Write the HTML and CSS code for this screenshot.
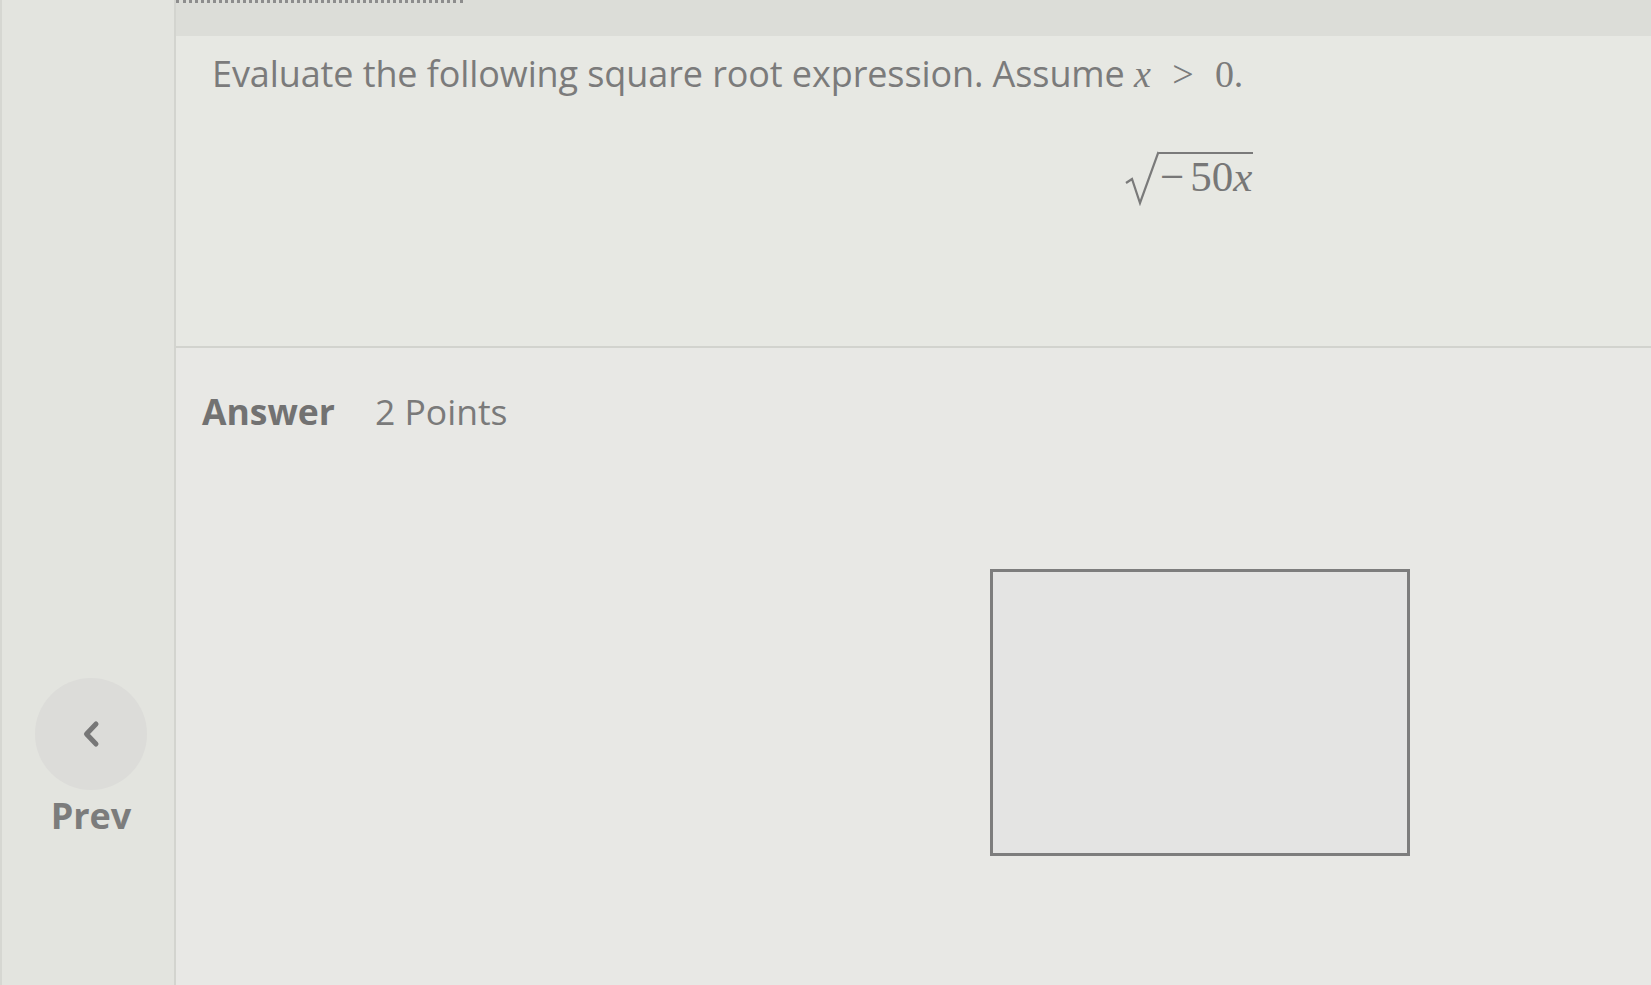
FILE: index.html
```html
<!DOCTYPE html>
<html lang="en">
<head>
<meta charset="utf-8">
<title>Question</title>
<link rel="stylesheet" href="styles.css">
</head>
<body>
<div class="page">
  <aside class="sidebar">
    <div class="nav-prev">
      <button class="prev-circle" type="button" aria-label="Previous">
        <svg width="22" height="30" viewBox="0 0 22 30"><path d="M16 5 L6.5 15 L16 25" fill="none" stroke="#777" stroke-width="5" stroke-linecap="round" stroke-linejoin="round"/></svg>
      </button>
      <span class="prev-label">Prev</span>
    </div>
  </aside>
  <main class="main">
    <div class="topbar"><div class="tab-dots"></div></div>
    <section class="question">
      <p class="prompt">Evaluate the following square root expression. Assume <span class="math"><i>x</i> <span class="rel">&gt;</span> 0.</span></p>
      <div class="expr">
        <svg class="radical" width="34" height="56" viewBox="0 0 34 56"><path d="M1 33 L7 29 L15 53 L33.5 2" fill="none" stroke="#7a7a7a" stroke-width="2.2"/></svg>
        <span class="radicand"><span class="minus">&minus;</span>50<i>x</i></span>
      </div>
    </section>
    <section class="answer">
      <div class="answer-head"><span class="answer-label">Answer</span><span class="points">2 Points</span></div>
      <div class="answer-box"></div>
    </section>
  </main>
</div>
</body>
</html>
```

FILE: styles.css
```css
html, body {
  margin: 0;
  padding: 0;
}
body {
  width: 1651px;
  height: 985px;
  overflow: hidden;
  background: #e6e7e2;
  font-family: "Open Sans", "Liberation Sans", sans-serif;
  color: #7a7a7a;
}
.page {
  display: flex;
  height: 985px;
}
.sidebar {
  width: 176px;
  flex: none;
  background: #e3e4df;
  border-right: 2px solid #d3d4cf;
  box-shadow: inset 10px 0 0 -8px #d6d7d2;
  display: flex;
  flex-direction: column;
  align-items: center;
  padding-top: 678px;
  padding-left: 8px;
  box-sizing: border-box;
}
.nav-prev {
  display: flex;
  flex-direction: column;
  align-items: center;
}
.prev-circle {
  width: 112px;
  height: 112px;
  border-radius: 50%;
  border: none;
  background: #dcdcd9;
  display: flex;
  align-items: center;
  justify-content: center;
  padding: 0;
  margin: 0;
}
.prev-label {
  margin-top: 5px;
  font-size: 36px;
  line-height: 42px;
  font-weight: 700;
  color: #7c7c7c;
}
.main {
  flex: 1;
  display: flex;
  flex-direction: column;
}
.topbar {
  height: 36px;
  background: #dcddd8;
  flex: none;
}
.tab-dots {
  width: 287px;
  margin-left: 0;
  border-top: 3px dotted #8d8d8d;
}
.question {
  height: 312px;
  box-sizing: border-box;
  background: #e7e8e3;
  border-bottom: 2px solid #d2d3ce;
  padding: 16px 0 0 36px;
}
.prompt {
  margin: 0;
  font-size: 36px;
  line-height: 44px;
  color: #7b7b7b;
  letter-spacing: -0.1px;
}
.math {
  font-family: "Liberation Serif", "Times New Roman", serif;
  font-size: 38px;
}
.math .rel {
  margin: 0 12px;
}
.expr {
  display: flex;
  align-items: flex-start;
  margin-top: 54px;
  padding-left: 913px;
}
.radical {
  display: block;
  flex: none;
}
.radicand {
  margin-top: 2px;
  border-top: 2.2px solid #7a7a7a;
  font-family: "Liberation Serif", "Times New Roman", serif;
  font-size: 43px;
  line-height: 46px;
  color: #777;
  padding: 0 1px 0 1px;
}
.minus {
  margin-right: 6px;
}
.answer {
  flex: 1;
  background: #e8e8e5;
  padding: 43px 0 0 26px;
}
.answer-head {
  display: flex;
  align-items: baseline;
  font-size: 35.5px;
  line-height: 40px;
}
.answer-label {
  font-weight: 700;
  color: #727272;
  margin-right: 40px;
}
.points {
  color: #7a7a7a;
}
.answer-box {
  margin-top: 138px;
  margin-left: 788px;
  width: 420px;
  height: 287px;
  box-sizing: border-box;
  border: 3px solid #7d7d7d;
  background: #e4e4e3;
}
```
